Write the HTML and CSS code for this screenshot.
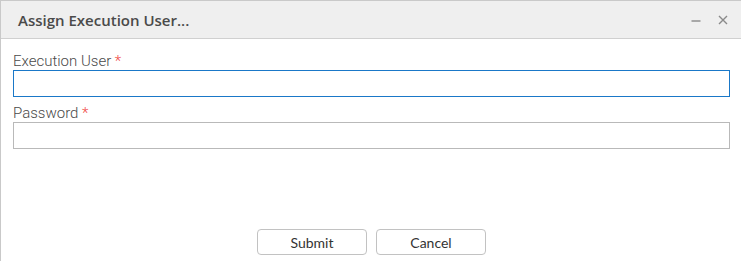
FILE: index.html
```html
<!DOCTYPE html>
<html>
<head>
<meta charset="utf-8">
<link rel="stylesheet" href="styles.css">
</head>
<body>
<div class="dialog">
  <div class="titlebar">
    <span class="title">Assign Execution User...</span>
    <div class="controls">
      <svg class="ctl" width="12" height="12" viewBox="0 0 12 12"><path d="M1.5 7h9" stroke="#8a8a8a" stroke-width="1.4"/></svg>
      <svg class="ctl" width="12" height="12" viewBox="0 0 12 12"><path d="M2 2l8 8M10 2l-8 8" stroke="#8a8a8a" stroke-width="1.4"/></svg>
    </div>
  </div>
  <div class="content">
    <label class="label">Execution User <span class="req">*</span></label>
    <input class="field focused" type="text">
    <label class="label second">Password <span class="req">*</span></label>
    <input class="field" type="password">
    <div class="footer">
      <button class="btn">Submit</button>
      <button class="btn">Cancel</button>
    </div>
  </div>
</div>
</body>
</html>
```
FILE: styles.css
```css
html, body {
  margin: 0;
  padding: 0;
  background: #fff;
}
.dialog {
  box-sizing: border-box;
  width: 741px;
  height: 261px;
  border-left: 1px solid #c9c9c9;
  border-top: 1px solid #c9c9c9;
  display: flex;
  flex-direction: column;
}
.titlebar {
  height: 37px;
  background: #efefef;
  border-bottom: 1px solid #d0d0d0;
  display: flex;
  align-items: center;
  justify-content: space-between;
  padding: 0 12px 0 17px;
}
.title {
  font-family: "Open Sans", sans-serif;
  font-weight: 600;
  font-size: 15px;
  color: #4a4a4a;
}
.controls {
  display: flex;
  gap: 15px;
  align-items: center;
}
.ctl { display: block; }
.content {
  flex: 1;
  display: flex;
  flex-direction: column;
  padding: 14px 11px 6px 12px;
}
.label {
  font-family: Roboto, sans-serif;
  font-weight: 300;
  font-size: 15px;
  line-height: 16px;
  color: #4a4a4a;
  margin-bottom: 1px;
}
.label.second { margin-top: 8px; }
.req { color: #f0473f; }
.field {
  box-sizing: border-box;
  height: 27px;
  border: 1px solid #b9b9b9;
  border-radius: 0;
  outline: none;
  margin: 0;
  padding: 0 6px;
  width: 100%;
}
.field.focused { border-color: #1a78c8; }
.footer {
  margin-top: auto;
  display: flex;
  justify-content: center;
  gap: 9px;
}
.btn {
  box-sizing: border-box;
  width: 110px;
  height: 26px;
  background: #fff;
  border: 1px solid #c2c2c2;
  border-radius: 4px;
  font-family: Lato, sans-serif;
  font-size: 14px;
  color: #333;
  padding: 0;
}
```
